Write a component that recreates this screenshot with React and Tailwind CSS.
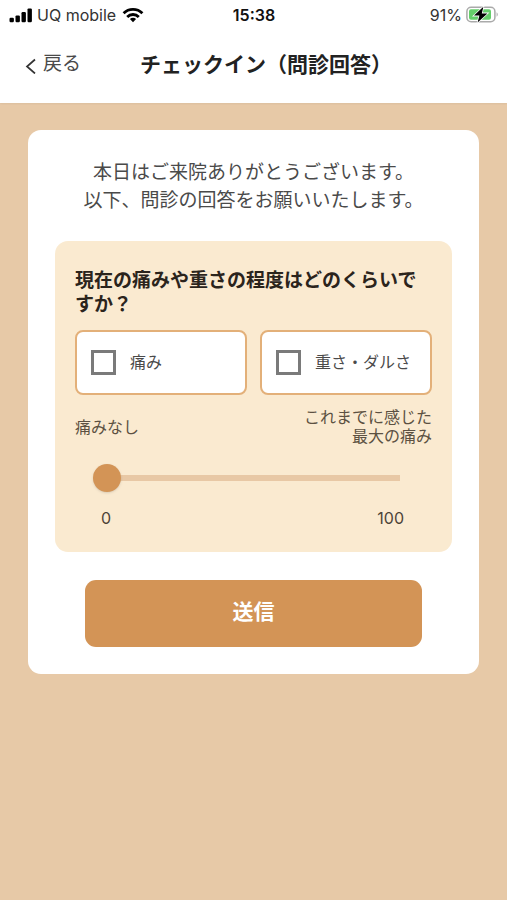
import { useState } from "react";

const StatusBar = () => (
  <div className="grid h-[30px] grid-cols-3 items-center pr-2 pl-[9px] text-[16px] leading-[30px] text-[#333]">
    <div className="flex items-center gap-1 whitespace-nowrap">
      <svg width="24" height="15" viewBox="0 0 24 15" fill="#000" aria-hidden="true">
        <rect x="0.5" y="9.8" width="4.4" height="4.4" rx="1.2" />
        <rect x="6.5" y="7.4" width="4.4" height="6.8" rx="1.2" />
        <rect x="12.5" y="4" width="4.4" height="10.2" rx="1.2" />
        <rect x="18.5" y="0.4" width="4.4" height="13.8" rx="1.2" />
      </svg>
      <span>UQ mobile</span>
      <svg width="22" height="16" viewBox="0 0 22 16" fill="none" stroke="#000" strokeWidth="2.8" className="ml-0.5" aria-hidden="true">
        <path d="M1.6 6.2a13.4 13.4 0 0 1 18.8 0" />
        <path d="M5.2 9.9a8.2 8.2 0 0 1 11.6 0" />
        <path d="M7.9 12.1a4.5 4.5 0 0 1 6.2 0L11 15.3z" fill="#000" stroke="none" />
      </svg>
    </div>
    <div className="text-center font-semibold text-[#111]">15:38</div>
    <div className="flex items-center justify-end gap-1">
      <span>91%</span>
      <svg width="33" height="18" viewBox="0 0 33 18" aria-hidden="true">
        <rect x="0.9" y="1.2" width="28" height="14.6" rx="4.2" fill="#fff" stroke="#aaa" strokeWidth="1.5" />
        <rect x="3" y="3.3" width="22" height="10.4" rx="2" fill="#65cf6b" />
        <path d="M30.6 6.3v4.4c1.6-.7 1.6-3.7 0-4.4z" fill="#aaa" />
        <path d="M17.4.8 8 9.6h5.4L11.6 16.4 21.4 7.4h-5.6z" fill="#000" stroke="#fff" strokeWidth="1.6" paintOrder="stroke" />
      </svg>
    </div>
  </div>
);

const CheckOption = ({ label, checked, onChange }) => (
  <label className="flex h-[65px] items-center gap-3.5 rounded-lg border-2 border-[#e3b079] bg-white px-3.5">
    <input
      type="checkbox"
      checked={checked}
      onChange={onChange}
      className="size-[25px] shrink-0 appearance-none border-[3px] border-[#7a7a7a] checked:bg-[#d39456]"
    />
    <span className="pb-0.5 text-[16px] whitespace-nowrap text-[#4a4a4a]">{label}</span>
  </label>
);

const App = () => {
  const [pain, setPain] = useState(false);
  const [heavy, setHeavy] = useState(false);
  const [level, setLevel] = useState(0);

  return (
    <div className="min-h-screen bg-[#e7c9a7] font-[Inter,'Noto_Sans_CJK_JP',sans-serif] text-[#4a4a4a]">
      <header className="bg-white pb-3 shadow-xs">
        <StatusBar />
        <div className="grid h-[61px] grid-cols-[1fr_auto_1fr] items-center pt-2 pl-[25px]">
          <button type="button" className="flex items-center gap-1.5 text-[19px]">
            <svg width="12" height="18" viewBox="0 0 12 18" fill="none" stroke="#333" strokeWidth="1.7" aria-hidden="true">
              <path d="M10 3.5 2 10.5l8 7" />
            </svg>
            戻る
          </button>
          <h1 className="text-[21px] font-bold whitespace-nowrap text-[#222]">チェックイン（問診回答）</h1>
        </div>
      </header>

      <main className="px-7 pt-[27px]">
        <form className="rounded-[13px] bg-white px-[27px] pt-[29px] pb-[27px]" onSubmit={(e) => e.preventDefault()}>
          <p className="mb-[26px] text-center text-[19px] leading-7">
            本日はご来院ありがとうございます。
            <br />
            以下、問診の回答をお願いいたします。
          </p>

          <section className="rounded-[13px] bg-[#faead0] px-5 pt-7 pb-[22px]">
            <h2 className="mb-[13px] text-[19px] leading-6 font-bold text-[#2b241c]">
              現在の痛みや重さの程度はどのくらいですか？
            </h2>

            <div className="grid grid-cols-2 gap-[13px]">
              <CheckOption label="痛み" checked={pain} onChange={(e) => setPain(e.target.checked)} />
              <CheckOption label="重さ・ダルさ" checked={heavy} onChange={(e) => setHeavy(e.target.checked)} />
            </div>

            <div className="mt-[13px] flex items-center justify-between text-[16px] leading-[19px] text-[#5c5142]">
              <span>痛みなし</span>
              <span className="text-right">
                これまでに感じた
                <br />
                最大の痛み
              </span>
            </div>

            <div className="mt-[18px] px-[18px]">
              <input
                type="range"
                min="0"
                max="100"
                value={level}
                onChange={(e) => setLevel(Number(e.target.value))}
                aria-label="痛みの程度"
                className="block h-7 w-full appearance-none bg-transparent bg-[linear-gradient(#e8c8a5,#e8c8a5)] bg-[length:calc(100%-28px)_6px] bg-center bg-no-repeat [&::-webkit-slider-thumb]:size-7 [&::-webkit-slider-thumb]:appearance-none [&::-webkit-slider-thumb]:rounded-full [&::-webkit-slider-thumb]:bg-[#d39456] [&::-webkit-slider-thumb]:shadow"
              />
              <div className="mt-3.5 flex justify-between pr-2.5 pl-2 text-[16px] leading-6 text-[#4d4438]">
                <span>0</span>
                <span>100</span>
              </div>
            </div>
          </section>

          <button
            type="submit"
            className="mx-auto mt-7 block h-[67px] w-[85%] rounded-[11px] bg-[#d39456] pb-1 text-[21px] font-bold text-white"
          >
            送信
          </button>
        </form>
      </main>
    </div>
  );
};

export default App;
